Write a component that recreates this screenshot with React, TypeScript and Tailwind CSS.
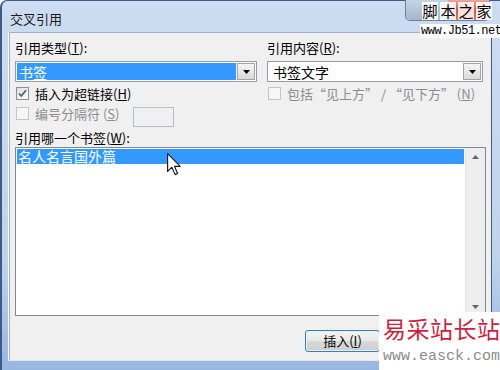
import React from "react";

function Acc({ c }: { c: string }) {
  return (
    <>
      (<span className="underline underline-offset-[1px]">{c}</span>)
    </>
  );
}

function Arrow({ dir = "down", color = "#000" }: { dir?: "down" | "up"; color?: string }) {
  return (
    <svg width="7" height="4" viewBox="0 0 7 4">
      {dir === "down" ? <path d="M0 0h7L3.5 4z" fill={color} /> : <path d="M0 4h7L3.5 0z" fill={color} />}
    </svg>
  );
}

function Combo({ text, selected }: { text: string; selected?: boolean }) {
  return (
    <div className="flex h-[21px] border border-[#9a9ca3] bg-white p-[1px]">
      <div
        className={`flex-1 flex items-center pl-[2px] text-[14px] ${selected ? "bg-[#3399ff] text-white" : "pl-[4px] text-black"}`}
      >
        {text}
      </div>
      <div className="ml-[1px] w-[18px] flex items-center justify-center border border-[#9fa3aa] bg-gradient-to-b from-[#f6f6f6] to-[#d9d9d9]">
        <Arrow />
      </div>
    </div>
  );
}

function Check({ checked, disabled }: { checked?: boolean; disabled?: boolean }) {
  return (
    <span
      className={`flex h-[13px] w-[13px] shrink-0 items-center justify-center border ${
        disabled ? "border-[#c4c4c4] bg-[#f6f6f6]" : "border-[#8e8f8f] bg-gradient-to-br from-[#dedede] to-[#ffffff]"
      }`}
    >
      {checked && (
        <svg width="9" height="9" viewBox="0 0 9 9">
          <path d="M1 4.5l2.3 2.5L8 1.3" fill="none" stroke="#4a5f80" strokeWidth="1.8" />
        </svg>
      )}
    </span>
  );
}

export default function App() {
  return (
    <div className="relative h-[370px] w-[500px] overflow-hidden bg-white font-['Noto_Sans_CJK_SC','Noto_Sans',sans-serif] text-[13px] leading-[16px] text-black">
      {/* Window frame */}
      <div className="flex h-[370px] w-[500px] flex-col rounded-tl-[7px] border-l-[2px] border-t border-[#3d5b86] bg-[linear-gradient(to_bottom,#cddcf0,#bfd3ec_70%,#98b7e0)] pb-[9px] pl-[7px] pr-[8px]">
        {/* Title bar */}
        <div className="flex h-[31px] shrink-0 items-center pl-[1px] pt-[4px] text-[13px] text-[#1c1c1c]">
          交叉引用
        </div>
        {/* Client area */}
        <div className="flex flex-1 flex-col border border-[#9db0cb] border-r-[#3e5a84] border-b-[#dfe7f2] bg-[#f0f0f0] px-[5px] pt-[7px] shadow-[-1px_0_0_#ffffff]">
          <div className="grid grid-cols-[242px_216px] gap-x-[10px]">
            {/* left column */}
            <div className="flex flex-col">
              <div className="h-[16px]">
                引用类型<Acc c="T" />:
              </div>
              <div className="mt-[5px]">
                <Combo text="书签" selected />
              </div>
              <div className="mt-[3px] flex h-[16px] items-center gap-[6px] pl-[1px]">
                <Check checked />
                <span className="pt-[2px]">
                  插入为超链接<Acc c="H" />
                </span>
              </div>
              <div className="mt-[3px] flex items-start">
                <div className="flex h-[16px] items-center gap-[6px] pl-[1px] pt-[2px] text-[#8d8d8d]">
                  <Check disabled />
                  <span className="pt-[2px]">
                    编号分隔符 <Acc c="S" />
                  </span>
                </div>
                <div className="ml-[14px] mt-[3px] h-[20px] w-[41px] border border-[#b6bfcc] bg-[#f0f0f0]" />
              </div>
            </div>
            {/* right column */}
            <div className="flex flex-col">
              <div className="h-[16px]">
                引用内容<Acc c="R" />:
              </div>
              <div className="mt-[5px]">
                <Combo text="书签文字" />
              </div>
              <div className="mt-[3px] flex h-[16px] items-center gap-[6px] pl-[1px] text-[#8d8d8d]">
                <Check disabled />
                <span className="whitespace-nowrap pt-[2px]">
                  包括“见上方” / “见下方” <Acc c="N" />
                </span>
              </div>
            </div>
          </div>

          <div className="mt-[3px] h-[16px]">
            引用哪一个书签<Acc c="W" />:
          </div>
          <div className="mt-[1px] flex h-[169px] border border-[#828790] bg-white">
            <div className="flex-1 p-[1px]">
              <div className="h-[15px] bg-[#3399ff] pl-[1px] text-[14px] leading-[15px] text-white">名人名言国外篇</div>
            </div>
            <div className="flex w-[20px] flex-col justify-between border-l border-[#e2e2e2] bg-[#eeeeee]">
              <div className="flex h-[17px] items-center justify-center">
                <Arrow dir="up" color="#666" />
              </div>
              <div className="flex h-[17px] items-center justify-center">
                <Arrow dir="down" color="#666" />
              </div>
            </div>
          </div>

          <div className="mt-[14px] flex justify-end pr-[106px]">
            <button className="h-[22px] w-[75px] rounded-[3px] border border-[#3c7fb1] bg-[linear-gradient(to_bottom,#f4f4f4,#e8e8e8_50%,#d9d9d9_51%,#cdcdcd)] text-[13px] leading-[18px] shadow-[inset_0_0_0_1px_#dff1fb]">
              插入<Acc c="I" />
            </button>
          </div>
        </div>
      </div>

      {/* Caption buttons (top right) */}
      <div className="absolute left-[405px] top-0 flex h-[21px] w-[85px] overflow-hidden rounded-b-[5px] border border-t-0 border-[#6d7f99]">
        <div className="w-[42px] bg-gradient-to-b from-[#c6d3e3] to-[#a4b7d0]" />
        <div className="flex-1 bg-gradient-to-b from-[#e7a79f] via-[#cc5a4e] to-[#d8776c]" />
      </div>
      {/* jb51 watermark */}
      <div className="absolute left-[422px] top-[2px] flex gap-[2px] text-[15px] leading-[18px] text-black">
        <span className="w-[16px] bg-white/90 text-center">脚</span>
        <span className="w-[16px] bg-white/85 text-center">本</span>
        <span className="w-[16px] bg-white/80 text-center">之</span>
        <span className="w-[16px] bg-white/90 text-center">家</span>
      </div>
      <div className="absolute left-[420px] top-[24px] h-[14px] w-[80px] bg-white pl-[1px] font-['Liberation_Mono',monospace] text-[12px] leading-[14px] tracking-[-0.5px] text-black">
        www.Jb51.net
      </div>

      {/* Mouse cursor */}
      <svg className="absolute left-[167px] top-[153px]" width="15" height="23" viewBox="0 0 13 20">
        <path
          d="M0.5 0.5L0.5 16L4.2 12.4L7 18.8L9.2 17.8L6.5 11.6L11.5 11.6Z"
          fill="#ffffff"
          stroke="#1a1a1a"
          strokeWidth="1"
          strokeLinejoin="round"
        />
      </svg>

      {/* easck watermark */}
      <div className="absolute left-[379px] top-[312px] flex h-[58px] w-[121px] flex-col bg-white pl-[4px]">
        <div className="mt-[3px] h-[26px] whitespace-nowrap text-[23px] leading-[26px] tracking-[0.5px] text-[#cc1f3f]">易采站长站</div>
        <div className="mt-[8px] h-[16px] whitespace-nowrap font-['Liberation_Mono',monospace] text-[15px] leading-[16px] text-[#8c8c8c]">
          www.easck.com
        </div>
      </div>
    </div>
  );
}
